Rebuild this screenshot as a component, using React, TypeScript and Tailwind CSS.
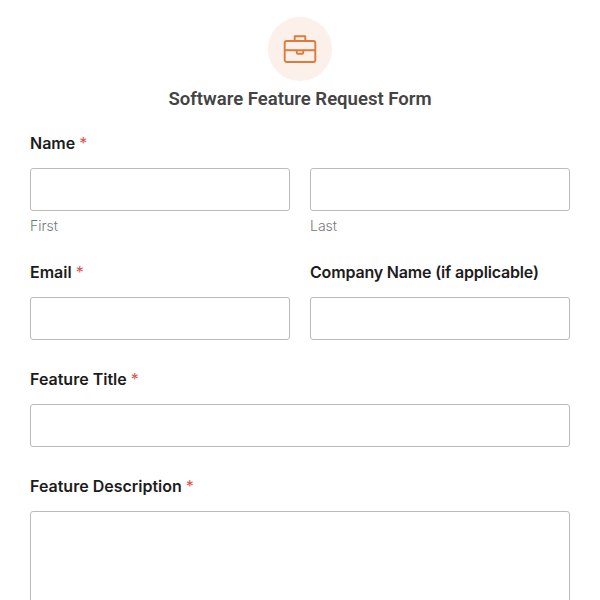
function Label({ text, required, tight }: { text: string; required?: boolean; tight?: boolean }) {
  return (
    <label className={tight ? "block text-[16px] leading-[24px] font-semibold tracking-[-0.17px] text-[#1c1c1c]" : "block text-[16px] leading-[24px] font-semibold text-[#1c1c1c]"}>
      {text}
      {required && <span className="ml-[4px] font-normal text-[#d9544f]">*</span>}
    </label>
  );
}

function Input() {
  return <div className="h-[43px] rounded-[3px] border border-[#bbbbbb] bg-white" />;
}

export default function App() {
  return (
    <div className="h-[600px] overflow-hidden bg-white px-[30px] pt-[17px] font-['Inter',sans-serif]">
      <div className="flex flex-col items-center">
        <div className="flex h-[64px] w-[64px] items-center justify-center rounded-full bg-[#fbf0ea]">
          <svg width="34" height="30" viewBox="0 0 34 30" fill="none" stroke="#de7b3b" strokeWidth="1.9" strokeLinejoin="round">
            <rect x="1.7" y="7" width="30.6" height="21" rx="2" />
            <path d="M11.7 7V2.2h10.6V7M1.7 16.2h30.6M13.8 16.2v2.6a1 1 0 0 0 1 1h4.4a1 1 0 0 0 1-1v-2.6" />
          </svg>
        </div>
        <h1 className="mt-[7px] font-['Roboto',sans-serif] text-[18.55px] leading-[22px] font-semibold text-[#444444]">Software Feature Request Form</h1>
      </div>

      <div className="mt-[21px]">
        <Label text="Name" required />
        <div className="mt-[13px] grid grid-cols-2 gap-x-[20px]">
          <div>
            <Input />
            <div className="mt-[5px] text-[14px] leading-[20px] font-light text-[#777777]">First</div>
          </div>
          <div>
            <Input />
            <div className="mt-[5px] text-[14px] leading-[20px] font-light text-[#777777]">Last</div>
          </div>
        </div>
      </div>

      <div className="mt-[24px] grid grid-cols-2 gap-x-[20px]">
        <div>
          <Label text="Email" required />
          <div className="mt-[13px]"><Input /></div>
        </div>
        <div>
          <Label text="Company Name (if applicable)" tight />
          <div className="mt-[13px]"><Input /></div>
        </div>
      </div>

      <div className="mt-[27px]">
        <Label text="Feature Title" required />
        <div className="mt-[13px]"><Input /></div>
      </div>

      <div className="mt-[27px]">
        <Label text="Feature Description" required />
        <div className="mt-[13px] h-[140px] rounded-[3px] border border-[#bbbbbb] bg-white" />
      </div>
    </div>
  );
}
